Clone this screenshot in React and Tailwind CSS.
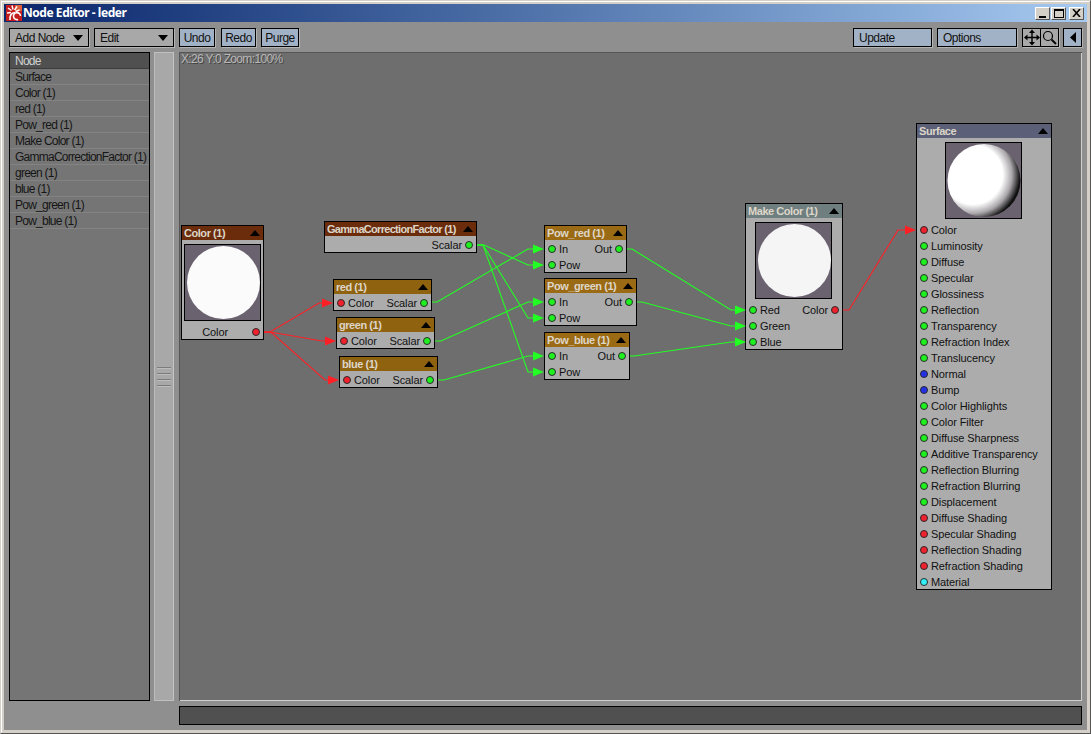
const portColors = {
    g: "bg-[#1ff01f]",
    r: "bg-[#f0202c]",
    b: "bg-[#2230e6]",
    c: "bg-[#2ff0f8]",
};

const listItems = [
    "Surface",
    "Color (1)",
    "red (1)",
    "Pow_red (1)",
    "Make Color (1)",
    "GammaCorrectionFactor (1)",
    "green (1)",
    "blue (1)",
    "Pow_green (1)",
    "Pow_blue (1)",
];

const surfacePorts = [
    ["Color", "r"],
    ["Luminosity", "g"],
    ["Diffuse", "g"],
    ["Specular", "g"],
    ["Glossiness", "g"],
    ["Reflection", "g"],
    ["Transparency", "g"],
    ["Refraction Index", "g"],
    ["Translucency", "g"],
    ["Normal", "b"],
    ["Bump", "b"],
    ["Color Highlights", "g"],
    ["Color Filter", "g"],
    ["Diffuse Sharpness", "g"],
    ["Additive Transparency", "g"],
    ["Reflection Blurring", "g"],
    ["Refraction Blurring", "g"],
    ["Displacement", "g"],
    ["Diffuse Shading", "r"],
    ["Specular Shading", "r"],
    ["Reflection Shading", "r"],
    ["Refraction Shading", "r"],
    ["Material", "c"],
];

// x,y pairs in page coordinates, last point is the arrow base
const greenWires = [
    [477, 245, 484, 245, 528, 265, 533, 265],
    [477, 245, 483, 245, 528, 318, 533, 318],
    [477, 245, 483, 245, 528, 372, 533, 372],
    [432, 302, 437, 302, 528, 249, 533, 249],
    [435, 341, 441, 341, 528, 302, 533, 302],
    [438, 380, 444, 380, 528, 356, 533, 356],
    [627, 249, 632, 249, 731, 310, 735, 310],
    [637, 302, 642, 302, 731, 326, 735, 326],
    [630, 356, 634, 356, 731, 342, 735, 342],
];

const redWires = [
    [264, 332, 270, 332, 319, 303, 322, 303],
    [264, 332, 270, 332, 322, 341, 325, 341],
    [264, 332, 272, 333, 325, 380, 328, 380],
    [843, 310, 849, 310, 898, 230, 905, 230],
];

const Dot = ({ color }) => (
    <span className={`w-2 h-2 shrink-0 rounded-full border border-[#2a2a2a] ${portColors[color]}`} />
);

const Triangle = () => (
    <svg width="10" height="6" viewBox="0 0 10 6" className="shrink-0">
        <polygon points="5,0 10,6 0,6" fill="#000" />
    </svg>
);

const Row = ({ inLabel, inColor, outLabel, outColor, outClass = "mr-[3px]" }) => (
    <div className="h-4 shrink-0 flex items-center pl-[3px] pr-[3px] text-[#111] text-[11px] tracking-[-0.1px]">
        {inLabel && <Dot color={inColor} />}
        {inLabel && <span className="ml-[3px] whitespace-nowrap">{inLabel}</span>}
        {outLabel && (
            <span className={`ml-auto whitespace-nowrap ${outClass}`}>{outLabel}</span>
        )}
        {outLabel && <Dot color={outColor} />}
    </div>
);

const Node = ({ title, header, className, titleClass = "tracking-[-0.45px]", children }) => (
    <div className={`absolute overflow-hidden border border-black bg-[#acacac] ${className}`}>
        <div className={`h-[14px] flex items-center justify-between pl-[2px] pr-[3px] ${header}`}>
            <span className={`text-[#ddd6c8] text-[11px] font-bold whitespace-nowrap ${titleClass}`}>{title}</span>
            <Triangle />
        </div>
        {children}
    </div>
);

const Preview = ({ className = "", box = "mx-auto" }) => (
    <div className={`w-[77px] h-[77px] mt-1 mb-[3px] border border-black bg-[#6b6270] flex items-center justify-end ${box}`}>
        <div className={`w-[73px] h-[73px] rounded-full ${className}`} />
    </div>
);

const SpherePreview = () => (
    <div className="w-[77px] h-[77px] ml-[28px] mt-1 mb-[3px] border border-black bg-[#6b6270]">
        <svg width="75" height="75" viewBox="0 0 75 75">
            <defs>
                <radialGradient id="sphere" cx="0.35" cy="0.42" r="0.7">
                    <stop offset="0.58" stopColor="#fff" />
                    <stop offset="0.76" stopColor="#aaa6aa" />
                    <stop offset="0.92" stopColor="#111" />
                </radialGradient>
            </defs>
            <circle cx="38" cy="37.5" r="36.5" fill="url(#sphere)" />
        </svg>
    </div>
);

const Button = ({ children, className = "" }) => (
    <div className={`h-[19px] flex items-center border border-black text-[#111] text-xs tracking-[-0.5px] shadow-[1px_1px_0_#b4b4b4] ${className}`}>
        {children}
    </div>
);

const Select = ({ label }) => (
    <Button className="w-20 bg-[#a8a8a8] pl-[5px] pr-[5px] justify-between">
        <span>{label}</span>
        <svg width="10" height="6" viewBox="0 0 10 6">
            <polygon points="0,0 10,0 5,6" fill="#000" />
        </svg>
    </Button>
);

const Wire = ({ pts, color }) => {
    const n = pts.length;
    const y = pts[n - 1];
    const x = pts[n - 2];
    return (
        <g>
            <polyline points={pts.join(",")} fill="none" stroke={color} strokeWidth="1.1" />
            <polygon points={`${x},${y - 4.5} ${x + 11},${y} ${x},${y + 4.5}`} fill={color} />
        </g>
    );
};

const App = () => {
    return (
        <div className="w-[1091px] h-[734px] border border-[#d4d0c8] border-r-[#555] border-b-[#555] font-['Liberation_Sans',sans-serif] overflow-hidden">
            <div className="h-full border border-white border-r-[#d4d0c8] border-b-[#d4d0c8]">
                <div className="h-full border-2 border-[#d4d0c8] flex flex-col bg-[#8f8f8f]">

                    {/* Title bar */}
                    <div className="h-[18px] shrink-0 flex items-center bg-gradient-to-r from-[#0a246a] to-[#a6caf0] pr-[3px]">
                        <svg width="16" height="16" viewBox="0 0 16 16" className="ml-[2px] shrink-0">
                            <rect width="16" height="16" fill="#c41c1c" />
                            <rect x="9" width="7" height="6" fill="#e0603c" />
                            <path d="M1 8 L5 7.5 M2 3 L5.5 5.5 M6 0.5 L7 4.5 M11 1.5 L8.5 5 M13.5 5 L9.5 6.5" stroke="#fff" strokeWidth="1.5" />
                            <path d="M4 15 Q3.5 8 9 7.5" fill="none" stroke="#fff" strokeWidth="1.6" />
                            <path d="M14.5 11 A3.5 3.5 0 1 0 12 14.5" fill="none" stroke="#fff" strokeWidth="1.6" />
                        </svg>
                        <span className="ml-[1px] text-white text-xs font-bold tracking-[-0.45px] font-['Noto_Sans',sans-serif]">Node Editor - leder</span>
                        <div className="ml-auto flex items-center">
                            <div className="w-[15px] h-[13px] bg-[#d4d0c8] border border-[#555] border-t-white border-l-white flex items-end justify-center pb-[1px]">
                                <div className="w-[7px] h-[2px] bg-black" />
                            </div>
                            <div className="ml-[1px] w-[15px] h-[13px] bg-[#d4d0c8] border border-[#555] border-t-white border-l-white flex items-center justify-center">
                                <div className="w-[10px] h-[9px] border border-black border-t-2" />
                            </div>
                            <div className="ml-[3px] w-[15px] h-[13px] bg-[#d4d0c8] border border-[#555] border-t-white border-l-white flex items-center justify-center">
                                <svg width="9" height="8" viewBox="0 0 9 8">
                                    <path d="M1 0 L8 8 M8 0 L1 8" stroke="#000" strokeWidth="1.6" />
                                </svg>
                            </div>
                        </div>
                    </div>

                    {/* Toolbar */}
                    <div className="mt-[6px] px-[5px] flex items-center shrink-0">
                        <Select label="Add Node" />
                        <div className="w-[5px]" />
                        <Select label="Edit" />
                        <div className="w-[5px]" />
                        <Button className="w-9 bg-[#a2b2c6] justify-center">Undo</Button>
                        <div className="w-[6px]" />
                        <Button className="w-[35px] bg-[#a2b2c6] justify-center">Redo</Button>
                        <div className="w-[5px]" />
                        <Button className="w-[38px] bg-[#a2b2c6] justify-center">Purge</Button>

                        <div className="ml-auto flex items-center">
                            <Button className="w-[79px] bg-[#a2b2c6] pl-[5px]">Update</Button>
                            <div className="w-[5px]" />
                            <Button className="w-20 bg-[#a2b2c6] pl-[5px]">Options</Button>
                            <div className="w-[5px]" />
                            <Button className="w-[37px] bg-[#a8a8a8]">
                                <svg width="35" height="17" viewBox="0 0 35 17">
                                    <path d="M9 2 V15 M2.5 8.5 H15.5" stroke="#000" strokeWidth="1.4" />
                                    <polygon points="9,0.5 6,4 12,4" fill="#000" />
                                    <polygon points="9,16.5 6,13 12,13" fill="#000" />
                                    <polygon points="1,8.5 4.5,5.5 4.5,11.5" fill="#000" />
                                    <polygon points="17,8.5 13.5,5.5 13.5,11.5" fill="#000" />
                                    <path d="M17.5 0 V17" stroke="#000" strokeWidth="1" />
                                    <circle cx="25" cy="7" r="4.5" fill="none" stroke="#000" strokeWidth="1.2" />
                                    <path d="M28.5 10.5 L33 15" stroke="#000" strokeWidth="1.8" />
                                </svg>
                            </Button>
                            <div className="w-1" />
                            <Button className="w-[19px] bg-[#a2b2c6] justify-center">
                                <svg width="6" height="11" viewBox="0 0 6 11">
                                    <polygon points="6,0 6,11 0,5.5" fill="#000" />
                                </svg>
                            </Button>
                        </div>
                    </div>

                    {/* Main area */}
                    <div className="mt-[5px] h-[649px] shrink-0 px-[5px] flex">

                        {/* Node list */}
                        <div className="w-[141px] shrink-0 border border-black bg-[#757575] text-xs tracking-[-0.75px] text-[#161616]">
                            <div className="h-4 flex items-center pl-[5px] bg-[#505050] text-[#d0d0d0] border-b border-[#3c3c3c]">Node</div>
                            {listItems.map((item) => (
                                <div key={item} className="h-4 flex items-center pl-[5px] border-b border-[#838383] whitespace-nowrap">{item}</div>
                            ))}
                        </div>

                        {/* Splitter */}
                        <div className="w-5 ml-1 shrink-0 bg-[#a8a8a8] border border-[#c0c0c0] border-l-[#bcbcbc] border-r-[#c4c4c4] flex flex-col items-center justify-center gap-[4px]">
                            <div className="w-[14px] h-[2px] bg-[#7c7c7c] border-b border-[#bcbcbc]" />
                            <div className="w-[14px] h-[2px] bg-[#7c7c7c] border-b border-[#bcbcbc]" />
                            <div className="w-[14px] h-[2px] bg-[#7c7c7c] border-b border-[#bcbcbc]" />
                            <div className="w-[14px] h-[2px] bg-[#7c7c7c] border-b border-[#bcbcbc]" />
                        </div>

                        {/* Canvas */}
                        <div className="relative ml-[5px] flex-1 bg-[#6e6e6e] shadow-[inset_1px_1px_0_#555,inset_-1px_-1px_0_#cfcfcf] overflow-hidden">
                            <span className="absolute left-[2px] top-[-1px] text-[#b8b8b8] text-xs tracking-[-0.65px] whitespace-nowrap [text-shadow:1px_1px_0_#444]">X:26 Y:0 Zoom:100%</span>

                            <Node title="Color (1)" header="bg-[#6b2c0c]" className="left-[2px] top-[173px] w-[83px] h-[115px]">
                                <Preview className="bg-[#fbfbfb]" />
                                <Row outLabel="Color" outColor="r" outClass="mr-[24px]" />
                            </Node>

                            <Node title="GammaCorrectionFactor (1)" header="bg-[#6b2c0c]" titleClass="tracking-[-0.7px]" className="left-[145px] top-[169px] w-[153px] h-[32px]">
                                <div className="pt-[1px]">
                                    <Row outLabel="Scalar" outColor="g" />
                                </div>
                            </Node>

                            <Node title="red (1)" header="bg-[#8f6210]" className="left-[154px] top-[227px] w-[99px] h-[32px]">
                                <div className="pt-[1px]">
                                    <Row inLabel="Color" inColor="r" outLabel="Scalar" outColor="g" />
                                </div>
                            </Node>

                            <Node title="green (1)" header="bg-[#8f6210]" className="left-[157px] top-[265px] w-[99px] h-[32px]">
                                <div className="pt-[1px]">
                                    <Row inLabel="Color" inColor="r" outLabel="Scalar" outColor="g" />
                                </div>
                            </Node>

                            <Node title="blue (1)" header="bg-[#8f6210]" className="left-[160px] top-[304px] w-[99px] h-[32px]">
                                <div className="pt-[1px]">
                                    <Row inLabel="Color" inColor="r" outLabel="Scalar" outColor="g" />
                                </div>
                            </Node>

                            <Node title="Pow_red (1)" header="bg-[#9a6a14]" className="left-[365px] top-[173px] w-[83px] h-[48px]">
                                <div className="pt-[1px]">
                                    <Row inLabel="In" inColor="g" outLabel="Out" outColor="g" />
                                    <Row inLabel="Pow" inColor="g" />
                                </div>
                            </Node>

                            <Node title="Pow_green (1)" header="bg-[#9a6a14]" className="left-[365px] top-[226px] w-[93px] h-[48px]">
                                <div className="pt-[1px]">
                                    <Row inLabel="In" inColor="g" outLabel="Out" outColor="g" />
                                    <Row inLabel="Pow" inColor="g" />
                                </div>
                            </Node>

                            <Node title="Pow_blue (1)" header="bg-[#9a6a14]" className="left-[365px] top-[280px] w-[86px] h-[48px]">
                                <div className="pt-[1px]">
                                    <Row inLabel="In" inColor="g" outLabel="Out" outColor="g" />
                                    <Row inLabel="Pow" inColor="g" />
                                </div>
                            </Node>

                            <Node title="Make Color (1)" header="bg-[#6f7f80]" className="left-[566px] top-[151px] w-[98px] h-[147px]">
                                <Preview className="bg-[#f5f5f5]" box="ml-[9px]" />
                                <Row inLabel="Red" inColor="g" outLabel="Color" outColor="r" />
                                <Row inLabel="Green" inColor="g" />
                                <Row inLabel="Blue" inColor="g" />
                            </Node>

                            <Node title="Surface" header="bg-[#5b6078]" className="left-[737px] top-[71px] w-[136px] h-[467px]">
                                <SpherePreview />
                                {surfacePorts.map(([name, color]) => (
                                    <Row key={name} inLabel={name} inColor={color} />
                                ))}
                            </Node>

                            {/* Wires sit over the nodes' edges, in page coordinates */}
                            <svg className="absolute inset-0 pointer-events-none" width="903" height="649" viewBox="179 52 903 649">
                                {greenWires.map((pts, i) => (
                                    <Wire key={i} pts={pts} color="#22ff22" />
                                ))}
                                {redWires.map((pts, i) => (
                                    <Wire key={i} pts={pts} color="#ff2026" />
                                ))}
                            </svg>
                        </div>
                    </div>

                    {/* Status bar */}
                    <div className="mt-[5px] h-[19px] shrink-0 px-[5px] flex">
                        <div className="ml-[170px] flex-1 bg-[#505050] border border-black" />
                    </div>
                </div>
            </div>
        </div>
    );
};

export default App;
